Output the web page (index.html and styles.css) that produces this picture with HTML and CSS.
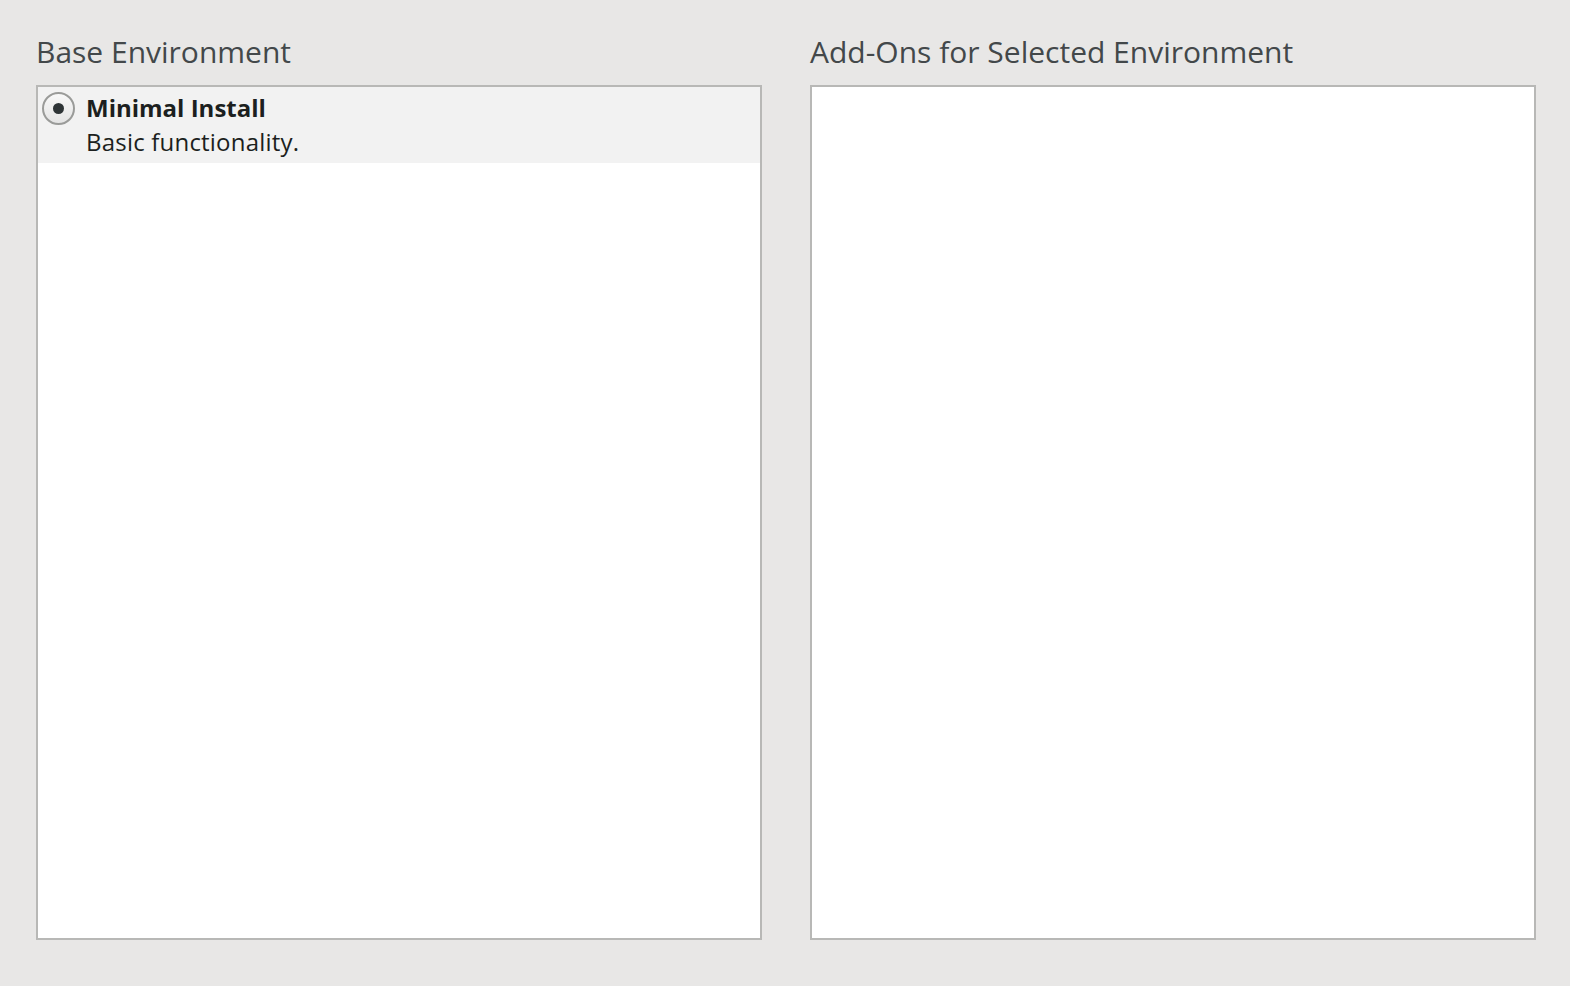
FILE: index.html
```html
<!DOCTYPE html>
<html>
<head>
<meta charset="utf-8">
<link rel="stylesheet" href="styles.css">
</head>
<body>
<div class="page">
  <section class="column">
    <h2 class="heading">Base Environment</h2>
    <div class="listbox">
      <div class="row selected">
        <span class="radio"><span class="dot"></span></span>
        <div class="row-text">
          <div class="title">Minimal Install</div>
          <div class="desc">Basic functionality.</div>
        </div>
      </div>
    </div>
  </section>
  <section class="column">
    <h2 class="heading">Add-Ons for Selected Environment</h2>
    <div class="listbox"></div>
  </section>
</div>
</body>
</html>
```
FILE: styles.css
```css
html, body {
  margin: 0;
  padding: 0;
  background: #e8e7e6;
  width: 1570px;
  height: 986px;
  overflow: hidden;
}
.page {
  display: flex;
  gap: 48px;
  padding: 30px 0 0 36px;
  font-family: "Open Sans", "Noto Sans", sans-serif;
  color: #2e3436;
}
.column {
  width: 726px;
  flex: none;
  display: flex;
  flex-direction: column;
}
.heading {
  margin: 0;
  font-weight: normal;
  font-size: 30px;
  line-height: 44px;
  height: 55px;
  color: #43484a;
}
.listbox {
  box-sizing: border-box;
  height: 855px;
  background: #fff;
  border: 2px solid #b8b8b6;
}
.row {
  display: flex;
  align-items: flex-start;
  background: #f2f2f2;
  height: 76px;
  padding: 4px 0 0 4px;
  box-sizing: border-box;
}
.radio {
  box-sizing: border-box;
  width: 33px;
  height: 33px;
  border-radius: 50%;
  border: 2px solid #9a9b99;
  background: linear-gradient(#f8f8f8, #e4e4e4);
  display: flex;
  align-items: center;
  justify-content: center;
  margin-top: 1px;
  flex: none;
}
.dot {
  width: 11px;
  height: 11px;
  border-radius: 50%;
  background: #2e3436;
}
.row-text {
  margin-left: 11px;
  font-size: 24px;
  line-height: 34px;
  color: #1c1f20;
}
.title {
  font-weight: bold;
}
.desc {
  letter-spacing: 0.2px;
}
```
